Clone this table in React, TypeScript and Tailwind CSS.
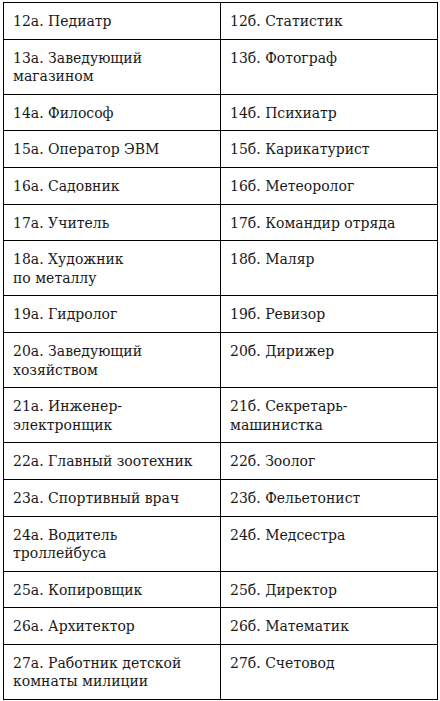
const rows: [string, string][] = [
  ["12а. Педиатр", "12б. Статистик"],
  ["13а. Заведующий\nмагазином", "13б. Фотограф"],
  ["14а. Философ", "14б. Психиатр"],
  ["15а. Оператор ЭВМ", "15б. Карикатурист"],
  ["16а. Садовник", "16б. Метеоролог"],
  ["17а. Учитель", "17б. Командир отряда"],
  ["18а. Художник\nпо металлу", "18б. Маляр"],
  ["19а. Гидролог", "19б. Ревизор"],
  ["20а. Заведующий\nхозяйством", "20б. Дирижер"],
  ["21а. Инженер-\nэлектронщик", "21б. Секретарь-\nмашинистка"],
  ["22а. Главный зоотехник", "22б. Зоолог"],
  ["23а. Спортивный врач", "23б. Фельетонист"],
  ["24а. Водитель\nтроллейбуса", "24б. Медсестра"],
  ["25а. Копировщик", "25б. Директор"],
  ["26а. Архитектор", "26б. Математик"],
  ["27а. Работник детской\nкомнаты милиции", "27б. Счетовод"],
]

export default function App() {
  return (
    <div className="w-[440px] h-[701px] bg-white pt-[2px] pl-[3px] overflow-hidden">
      <table
        className="w-[435px] border-collapse table-fixed text-[14px] leading-[18.6px] text-[#1a1a1a]"
        style={{ fontFamily: '"DejaVu Serif", "Liberation Serif", serif' }}
      >
        <tbody>
          {rows.map(([a, b], i) => (
            <tr key={i}>
              <td className="w-[217px] border border-black align-top whitespace-pre-line pl-[9px] pr-[4px] pt-[9px] pb-[8px]">
                {a}
              </td>
              <td className="border border-black align-top whitespace-pre-line pl-[9px] pr-[4px] pt-[9px] pb-[8px]">
                {b}
              </td>
            </tr>
          ))}
        </tbody>
      </table>
    </div>
  )
}
